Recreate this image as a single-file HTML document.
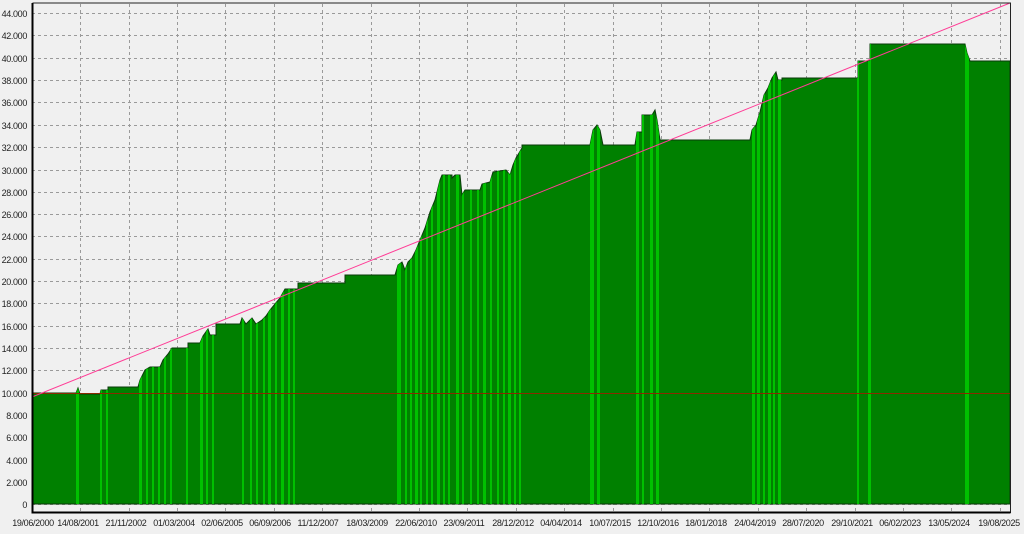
<!DOCTYPE html>
<html><head><meta charset="utf-8"><style>
html,body{margin:0;padding:0;background:#f0f0f0;width:1024px;height:534px;overflow:hidden}
text{font-family:"Liberation Sans",sans-serif;font-size:9px;fill:#222;letter-spacing:-0.35px}
</style></head><body>
<svg width="1024" height="534" viewBox="0 0 1024 534" xmlns="http://www.w3.org/2000/svg">
<defs>
<clipPath id="c"><polygon id="pp" points="32,504 32,393 76,393 78,388 80,394 100,394 101,390 108,390 108,387 138,387 140,380 145,370 150,367 160,367 163,360 168,354 172,348 188,348 188,343 200,343 203,336 208,329 210,335 216,335 216,324 240,324 242,318 246,324 252,318 256,324 262,320 266,316 270,310 275,304 280,298 285,289 298,289 298,283 345,283 345,275 395,275 398,265 402,262 405,270 408,262 412,258 416,250 420,240 425,228 430,212 435,200 440,180 442,175 452,175 452,178 455,175 460,175 462,195 465,190 480,190 482,184 490,182 493,172 506,170 510,175 513,165 516,158 522,148 522,145 590,145 593,130 597,125 600,130 603,145 635,145 637,132 642,132 642,115 652,115 655,110 657,120 660,140 750,140 752,130 756,125 760,112 764,95 768,88 772,78 776,72 778,80 782,80 782,78 858,78 858,61 870,61 870,44 965,44 967,53 970,61 1010,61 1010,504"/></clipPath>
</defs>
<g stroke="#9a9a9a" stroke-width="1" stroke-dasharray="3,3" fill="none">
<path d="M32,13.5H1010M32,35.5H1010M32,58.5H1010M32,80.5H1010M32,102.5H1010M32,125.5H1010M32,147.5H1010M32,170.5H1010M32,192.5H1010M32,214.5H1010M32,236.5H1010M32,259.5H1010M32,281.5H1010M32,303.5H1010M32,326.5H1010M32,348.5H1010M32,370.5H1010M32,393.5H1010M32,415.5H1010M32,437.5H1010M32,460.5H1010M32,482.5H1010M32,504.5H1010"/>
<path d="M80.5,4V512M129.5,4V512M177.5,4V512M225.5,4V512M274.5,4V512M322.5,4V512M371.5,4V512M419.5,4V512M467.5,4V512M516.5,4V512M564.5,4V512M613.5,4V512M661.5,4V512M709.5,4V512M758.5,4V512M806.5,4V512M855.5,4V512M903.5,4V512M951.5,4V512M1000.5,4V512"/>
</g>
<use href="#pp" fill="#008000" stroke="#0a3a0a" stroke-width="1"/>
<g clip-path="url(#c)" fill="#00c000">
<rect x="76" y="0" width="3" height="504"/><rect x="100" y="0" width="2" height="504"/><rect x="106" y="0" width="2" height="504"/>
<rect x="139" y="0" width="3" height="504"/><rect x="146" y="0" width="2" height="504"/><rect x="152" y="0" width="2" height="504"/><rect x="158" y="0" width="2" height="504"/><rect x="164" y="0" width="2" height="504"/><rect x="170" y="0" width="2" height="504"/><rect x="186" y="0" width="2" height="504"/><rect x="200" y="0" width="3" height="504"/><rect x="206" y="0" width="2" height="504"/><rect x="212" y="0" width="2" height="504"/>
<rect x="242" y="0" width="2" height="504"/><rect x="250" y="0" width="2" height="504"/><rect x="256" y="0" width="2" height="504"/><rect x="263" y="0" width="2" height="504"/><rect x="268" y="0" width="3" height="504"/><rect x="275" y="0" width="2" height="504"/><rect x="281" y="0" width="3" height="504"/><rect x="288" y="0" width="2" height="504"/><rect x="293" y="0" width="2" height="504"/>
<rect x="397" y="0" width="4" height="504"/><rect x="405" y="0" width="2" height="504"/><rect x="410" y="0" width="2" height="504"/><rect x="415" y="0" width="3" height="504"/><rect x="420" y="0" width="2" height="504"/><rect x="426" y="0" width="2" height="504"/><rect x="431" y="0" width="2" height="504"/><rect x="437" y="0" width="3" height="504"/><rect x="443" y="0" width="2" height="504"/><rect x="448" y="0" width="2" height="504"/><rect x="456" y="0" width="3" height="504"/><rect x="462" y="0" width="2" height="504"/><rect x="470" y="0" width="2" height="504"/><rect x="477" y="0" width="2" height="504"/><rect x="483" y="0" width="3" height="504"/><rect x="490" y="0" width="2" height="504"/><rect x="497" y="0" width="2" height="504"/><rect x="503" y="0" width="2" height="504"/><rect x="508" y="0" width="3" height="504"/><rect x="514" y="0" width="2" height="504"/><rect x="519" y="0" width="2" height="504"/>
<rect x="590" y="0" width="4" height="504"/><rect x="597" y="0" width="3" height="504"/><rect x="636" y="0" width="3" height="504"/><rect x="642" y="0" width="2" height="504"/><rect x="650" y="0" width="3" height="504"/><rect x="656" y="0" width="3" height="504"/>
<rect x="752" y="0" width="3" height="504"/><rect x="757" y="0" width="3" height="504"/><rect x="763" y="0" width="2" height="504"/><rect x="768" y="0" width="3" height="504"/><rect x="773" y="0" width="2" height="504"/><rect x="778" y="0" width="3" height="504"/>
<rect x="857" y="0" width="2" height="504"/><rect x="868" y="0" width="3" height="504"/><rect x="965" y="0" width="4" height="504"/>
</g>
<line x1="32" y1="393.5" x2="1010" y2="393.5" stroke="#8a2a00" stroke-width="1"/>
<line x1="32" y1="397" x2="1010" y2="3" stroke="#ff3c96" stroke-width="1"/>
<path d="M32.5,3V512.5H1010.5V3H32.5" fill="none" stroke="#222" stroke-width="1"/>
<path d="M32.5,3V512.5H1010.5" fill="none" stroke="#000" stroke-width="2"/>
<g text-anchor="end">
<text x="27" y="17">44.000</text><text x="27" y="39">42.000</text><text x="27" y="62">40.000</text><text x="27" y="84">38.000</text><text x="27" y="106">36.000</text><text x="27" y="129">34.000</text><text x="27" y="151">32.000</text><text x="27" y="174">30.000</text><text x="27" y="196">28.000</text><text x="27" y="218">26.000</text><text x="27" y="240">24.000</text><text x="27" y="263">22.000</text><text x="27" y="285">20.000</text><text x="27" y="307">18.000</text><text x="27" y="330">16.000</text><text x="27" y="352">14.000</text><text x="27" y="374">12.000</text><text x="27" y="397">10.000</text><text x="27" y="419">8.000</text><text x="27" y="441">6.000</text><text x="27" y="464">4.000</text><text x="27" y="486">2.000</text><text x="27" y="508">0</text>
</g>
<g text-anchor="middle">
<text x="33" y="526">19/06/2000</text><text x="78" y="526">14/08/2001</text><text x="126" y="526">21/11/2002</text><text x="174" y="526">01/03/2004</text><text x="222" y="526">02/06/2005</text><text x="270" y="526">06/09/2006</text><text x="318" y="526">11/12/2007</text><text x="367" y="526">18/03/2009</text><text x="416" y="526">22/06/2010</text><text x="464" y="526">23/09/2011</text><text x="513" y="526">28/12/2012</text><text x="561" y="526">04/04/2014</text><text x="610" y="526">10/07/2015</text><text x="658" y="526">12/10/2016</text><text x="706" y="526">18/01/2018</text><text x="755" y="526">24/04/2019</text><text x="803" y="526">28/07/2020</text><text x="852" y="526">29/10/2021</text><text x="900" y="526">06/02/2023</text><text x="949" y="526">13/05/2024</text><text x="999" y="526">19/08/2025</text>
</g>
</svg>
</body></html>
